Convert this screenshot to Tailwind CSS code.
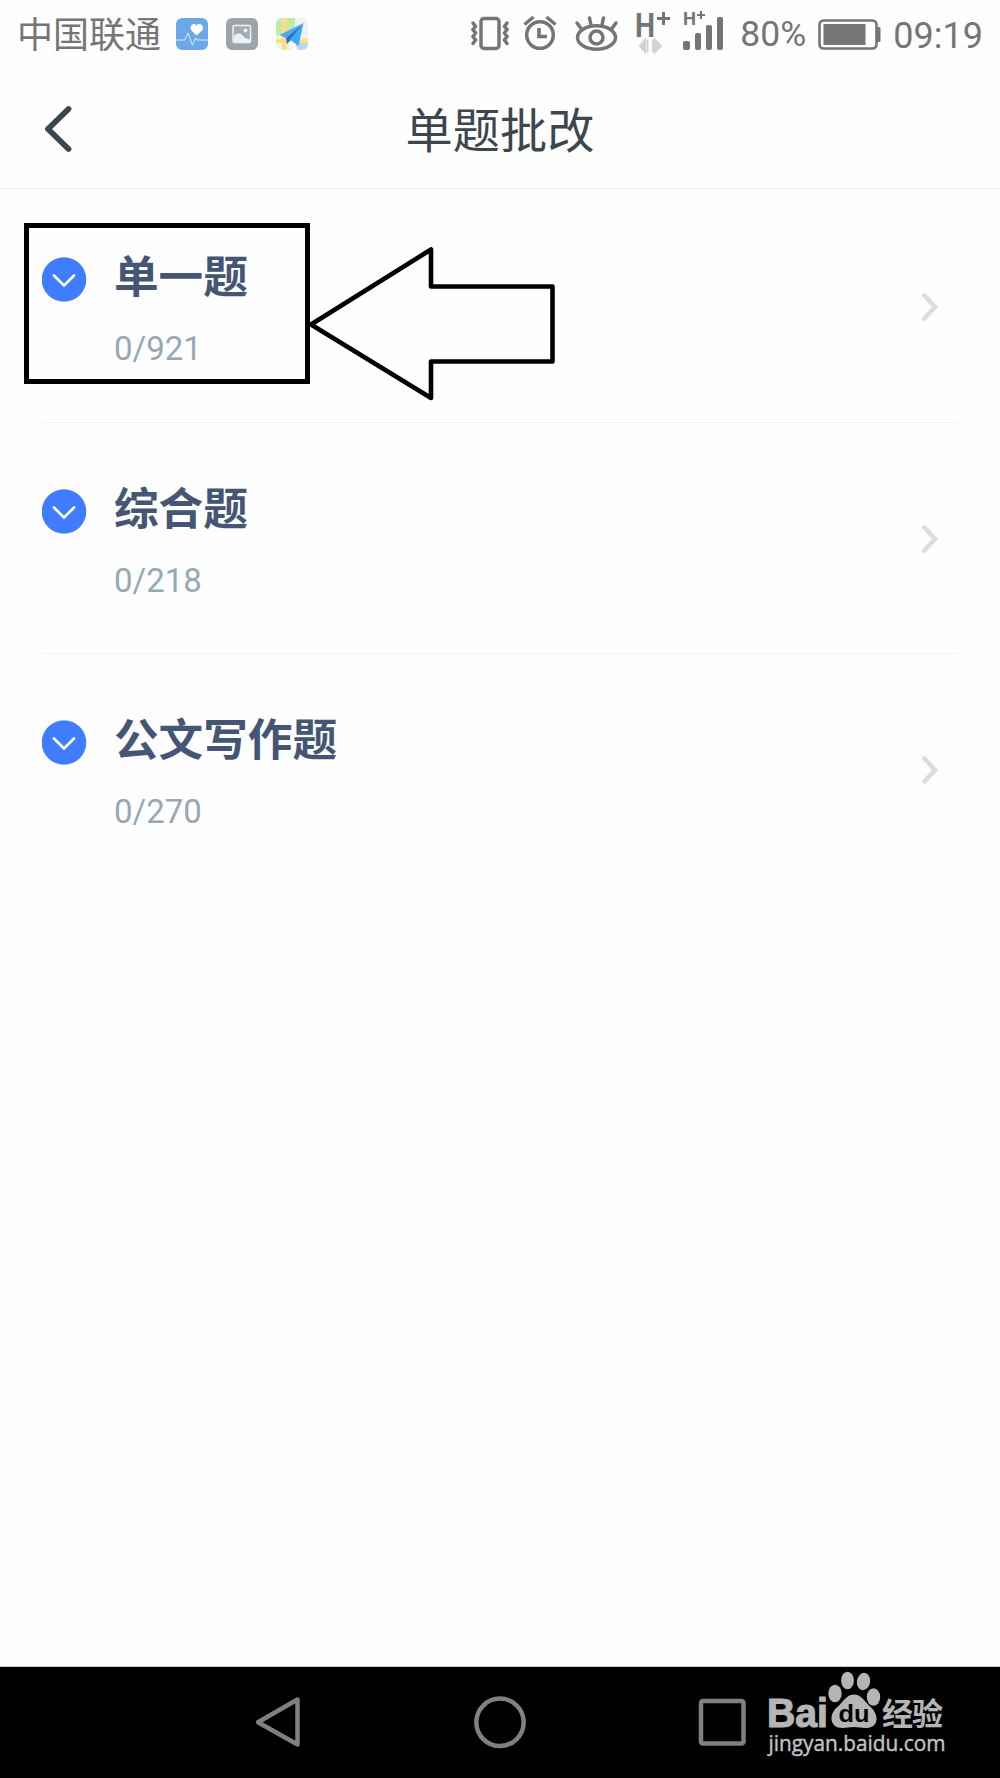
<!DOCTYPE html>
<html lang="zh-CN">
  <head>
    <meta charset="UTF-8" />
    <meta name="viewport" content="width=device-width, initial-scale=1.0" />
    <title>单题批改</title>
    <script src="https://cdn.jsdelivr.net/npm/@tailwindcss/browser@4"></script>
  </head>
  <body class="bg-[#fefefe] font-['Roboto','Noto_Sans_CJK_SC',sans-serif]">
    <div class="relative flex flex-col w-[1000px] h-[1778px] overflow-hidden">
      <!-- Status bar -->
      <div class="flex items-center justify-between h-[68px] pl-[17px] pr-[17px] text-[36px] leading-none text-[#757575]">
        <div class="flex items-center">
          <span class="w-[159px] pt-[3px] text-[36px] whitespace-nowrap">中国联通</span>
          <svg class="w-8 h-8" viewBox="0 0 32 32">
            <rect width="32" height="32" rx="6" fill="#6ba8e8" />
            <path d="M20.500 17.500l-5-5c-3-4 2-9 5-5 3-4 9 1 5.500 5z" fill="#fff" />
            <path d="M0 22h9l3-7 4.500 12 3-7 1.500 2h11" fill="none" stroke="#dcebfb" stroke-width="1" />
          </svg>
          <svg class="w-8 h-8 ml-[18px]" viewBox="0 0 32 32">
            <rect width="32" height="32" rx="6" fill="#9ca5ac" />
            <rect x="7" y="7.500" width="17.500" height="17" rx="1.500" fill="#a3acb3" stroke="#eef1f3" stroke-width="1.500" />
            <circle cx="19.500" cy="12.500" r="2" fill="#eef1f3" />
            <path d="M8 18c3-3 6-3 8-1l3 3 5 1.500v3H8z" fill="#eef1f3" />
          </svg>
          <svg class="w-8 h-8 ml-[18px]" viewBox="0 0 32 32">
            <clipPath id="map"><rect width="32" height="32" rx="6" /></clipPath>
            <g clip-path="url(#map)">
              <rect width="32" height="32" fill="#f3f1ee" />
              <path d="M0 0h19v12L0 18z" fill="#c2eda0" />
              <path d="M19 25h13v7H22z" fill="#b7d6ff" />
              <path d="M0 21h32v4H0z" fill="#ffe374" />
              <path d="M6 0h5v32H6z" fill="#ffd98c" />
              <path d="M12 22l8 10" stroke="#fff" stroke-width="3" />
            </g>
            <path d="M27.500 5L3.500 17l6.500 3z" fill="#4aa9f5" />
            <path d="M27.500 5L10 20l1 6 4-4z" fill="#2a75b8" />
            <path d="M27.500 5L14 21.500l8.500 6.500z" fill="#3fa9ff" />
          </svg>
        </div>
        <div class="flex items-center">
          <svg class="w-[262px] h-[56px]" viewBox="0 0 262 56" fill="none" stroke="#757575" stroke-width="3.500" stroke-linecap="round">
            <!-- vibrate -->
            <rect x="11" y="12.500" width="18" height="30" rx="3" />
            <path d="M3 17l2.500 3.500-2.500 3 2.500 3.500-2.500 3.500 2.500 3.500-2.500 3.500M37 17l-2.500 3.500 2.500 3-2.500 3.500 2.500 3.500-2.500 3.500 2.500 3.500" />
            <!-- alarm -->
            <circle cx="70" cy="29" r="13.300" />
            <path d="M69 22v8.500h8" stroke-width="3.600" stroke-linecap="butt" />
            <path d="M54.500 18.500l9-7.500M85.500 18.500l-9-7.500" stroke-linecap="butt" />
            <!-- eye -->
            <ellipse cx="126.500" cy="31.500" rx="19" ry="11.800" />
            <circle cx="126.500" cy="31.500" r="6.500" />
            <path d="M107 17l4.500 6M119.500 12l1.500 7M133.500 12l-1.500 7M146 17l-4.500 6" />
            <!-- network -->
            <g stroke="none" fill="#757575" font-family="Roboto" font-weight="bold">
              <text x="165" y="31" font-size="34" textLength="20" lengthAdjust="spacingAndGlyphs">H</text>
              <text x="213" y="19" font-size="18.500" textLength="13" lengthAdjust="spacingAndGlyphs">H</text>
              <rect x="213" y="35" width="7" height="9" rx="2" />
              <rect x="225" y="27" width="6" height="17" rx="2" />
              <rect x="236" y="19" width="6" height="25" rx="2" />
              <rect x="247" y="11" width="6" height="33" rx="2" />
            </g>
            <path d="M187 12.500h13M193.500 6v13" stroke-linecap="butt" stroke-width="3" />
            <path d="M227 9h8M231 5v8" stroke-linecap="butt" stroke-width="2" />
            <path d="M177.500 33.500v13M175 34v12l-5-6zM183 33.500v13M185 34v12l6-6z" fill="#d2d2d2" stroke="#d2d2d2" stroke-width="2" stroke-linecap="butt" />
          </svg>
          <span class="w-[85px] pl-[8px] pt-[2px] text-[35.5px]">80%</span>
          <svg class="w-[64px] h-8" viewBox="0 0 64 32" fill="none">
            <rect x="2.500" y="2.500" width="57" height="28" rx="4" stroke="#757575" stroke-width="2.600" />
            <rect x="6.500" y="6" width="42" height="21" fill="#757575" />
            <path d="M59.500 9h2.500q1.500 0 1.500 1.500v12q0 1.500-1.500 1.500H59.500z" fill="#757575" />
          </svg>
          <span class="pl-[12px] pt-[3px]">09:19</span>
        </div>
      </div>

      <!-- Title bar -->
      <div class="grid grid-cols-3 items-center h-[121px] border-b border-[#efefef]">
        <svg class="w-8 h-12 ml-[43px] mt-[2px]" viewBox="0 0 32 48" fill="none" stroke="#3b464e" stroke-width="5.800" stroke-linecap="round" stroke-linejoin="round">
          <path d="M25.500 4L5 24l20.500 20" />
        </svg>
        <h1 class="pt-[9px] text-center text-[47.200px] leading-none text-[#3b464e] whitespace-nowrap">单题批改</h1>
      </div>

      <!-- Question types -->
      <ul class="flex flex-col px-[42px]">
        <li class="flex h-[234px] pt-[67px] border-b border-[#f2f2f2]">
          <svg class="w-[45px] h-[45px] mt-[1px]" viewBox="0 0 45 45"><circle cx="22" cy="22.500" r="22.300" fill="#3f7dfe" /><path d="M12 18.500l10 10 10-10" fill="none" stroke="#fff" stroke-width="2.600" stroke-linecap="round" stroke-linejoin="round" /></svg>
          <div class="flex-1 pl-[27px]">
            <h2 class="text-[44.600px] leading-[44px] font-bold text-[#455674]">单一题</h2>
            <p class="mt-[29px] text-[33px] leading-[40px] text-[#97a8b5]">0/921</p>
          </div>
          <svg class="w-[18px] h-[32px] mt-[35px] mr-[19px]" viewBox="0 0 18 32" fill="none" stroke="#dcdcdc" stroke-width="4.500"><path d="M2 3l12 13L2 29" /></svg>
        </li>
        <li class="flex h-[231px] pt-[65px] border-b border-[#f2f2f2]">
          <svg class="w-[45px] h-[45px] mt-[1px]" viewBox="0 0 45 45"><circle cx="22" cy="22.500" r="22.300" fill="#3f7dfe" /><path d="M12 18.500l10 10 10-10" fill="none" stroke="#fff" stroke-width="2.600" stroke-linecap="round" stroke-linejoin="round" /></svg>
          <div class="flex-1 pl-[27px]">
            <h2 class="text-[44.600px] leading-[44px] font-bold text-[#455674]">综合题</h2>
            <p class="mt-[29px] text-[33px] leading-[40px] text-[#97a8b5]">0/218</p>
          </div>
          <svg class="w-[18px] h-[32px] mt-[35px] mr-[19px]" viewBox="0 0 18 32" fill="none" stroke="#dcdcdc" stroke-width="4.500"><path d="M2 3l12 13L2 29" /></svg>
        </li>
        <li class="flex h-[231px] pt-[65px]">
          <svg class="w-[45px] h-[45px] mt-[1px]" viewBox="0 0 45 45"><circle cx="22" cy="22.500" r="22.300" fill="#3f7dfe" /><path d="M12 18.500l10 10 10-10" fill="none" stroke="#fff" stroke-width="2.600" stroke-linecap="round" stroke-linejoin="round" /></svg>
          <div class="flex-1 pl-[27px]">
            <h2 class="text-[44.600px] leading-[44px] font-bold text-[#455674]">公文写作题</h2>
            <p class="mt-[29px] text-[33px] leading-[40px] text-[#97a8b5]">0/270</p>
          </div>
          <svg class="w-[18px] h-[32px] mt-[35px] mr-[19px]" viewBox="0 0 18 32" fill="none" stroke="#dcdcdc" stroke-width="4.500"><path d="M2 3l12 13L2 29" /></svg>
        </li>
      </ul>

      <!-- Navigation bar -->
      <div class="mt-auto h-[112px] bg-black border-t border-[#c8c8c8]">
        <svg class="w-full h-[111px]" viewBox="0 1667 1000 111" fill="none" stroke="#808080" stroke-width="4.500" stroke-linejoin="round">
          <path d="M258 1722.300L297.500 1699.500v45z" />
          <circle cx="500" cy="1722.300" r="23.700" />
          <rect x="701" y="1701" width="42.500" height="42.500" rx="2" />
          <g fill="#b5b5b5" stroke="none">
            <text x="767" y="1726.500" font-family="Liberation Sans" font-weight="bold" font-size="40" textLength="61" lengthAdjust="spacingAndGlyphs" stroke="#b5b5b5" stroke-width="1.200">Bai</text>
            <ellipse cx="835" cy="1693.500" rx="6.700" ry="8.700" />
            <ellipse cx="847.500" cy="1680.500" rx="6.400" ry="8.700" />
            <ellipse cx="863.500" cy="1681.500" rx="6.600" ry="8.700" transform="rotate(10 863.500 1681.500)" />
            <ellipse cx="873.500" cy="1697" rx="6.700" ry="8.700" />
            <path d="M854 1694.500c7 0 10 6 15 11 5 4 7.500 9 7.500 13 0 7-5 9.500-11 9.500-4 0-7-1-11.500-1s-7.500 1-11.500 1c-6 0-11-3-11-9.500 0-5 2.500-9 7.500-13 5-5 8-11 15-11z" />
            <text x="838.500" y="1722" fill="#000" font-family="Liberation Sans" font-weight="bold" font-size="24" textLength="31" lengthAdjust="spacingAndGlyphs">du</text>
            <text x="882" y="1725" font-family="Noto Sans CJK SC" font-weight="bold" font-size="31" textLength="61">经验</text>
            <text x="768.500" y="1750.500" fill="#c4c4c4" stroke="#c4c4c4" stroke-width="0.400" font-family="Open Sans" font-size="21.500" textLength="177" lengthAdjust="spacingAndGlyphs">jingyan.baidu.com</text>
          </g>
        </svg>
      </div>

      <!-- Callout -->
      <div class="absolute left-[24px] top-[223px] w-[286px] h-[161px] border-[5px] border-black"></div>
      <svg class="absolute left-[300px] top-[240px] w-[260px] h-[170px]" viewBox="300 240 260 170" fill="none" stroke="#000" stroke-width="4.600" stroke-linejoin="round">
        <path d="M311 324.500L431 249.500v37h121.500v75H431v36.500z" />
      </svg>
    </div>
  </body>
</html>
